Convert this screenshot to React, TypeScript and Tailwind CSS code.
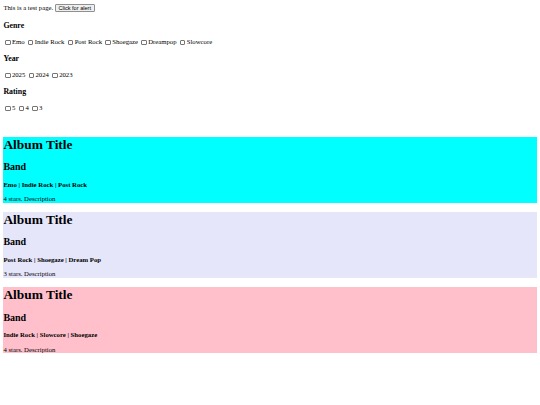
const GENRES = ["Emo", "Indie Rock", "Post Rock", "Shoegaze", "Dreampop", "Slowcore"];
const YEARS = ["2025", "2024", "2023"];
const RATINGS = ["5", "4", "3"];

const ALBUMS = [
  { bg: "bg-[#00ffff]", tags: "Emo | Indie Rock | Post Rock", stars: 4 },
  { bg: "bg-[#e6e6fa]", tags: "Post Rock | Shoegaze | Dream Pop", stars: 3 },
  { bg: "bg-[#ffc0cb]", tags: "Indie Rock | Slowcore | Shoegaze", stars: 4 },
];

function CheckRow({ items }: { items: string[] }) {
  return (
    <div className="flex h-[8.3px] items-center whitespace-pre">
      {items.map((item, i) => (
        <label key={item} className="flex items-center">
          <input
            type="checkbox"
            className={`m-0 ml-[1.7px] mr-[1.3px] h-[5.5px] w-[5.5px] appearance-none rounded-[1px] border-[0.6px] border-[#767676] bg-white ${i > 0 ? "ml-[3.4px]" : ""}`}
          />
          <span>{item}</span>
        </label>
      ))}
    </div>
  );
}

function Heading({ children }: { children: string }) {
  return <h3 className="mt-[7.86px] mb-[7.86px] text-[7.86px] leading-[9px] font-bold">{children}</h3>;
}

export default function App() {
  return (
    <div className="min-h-[405px] bg-white p-[3.4px] font-['Liberation_Serif',serif] text-[6.72px] leading-[7.8px] text-black">
      <div className="flex h-[10px] items-center">
        <span>This is a test page.&nbsp;</span>
        <button className="h-[8px] rounded-[1px] border-[0.6px] border-[#8f8f8f] bg-[#efefef] px-[2.5px] font-['Liberation_Sans',sans-serif] text-[5.6px] leading-[6.4px] text-black">
          Click for alert
        </button>
      </div>

      <Heading>Genre</Heading>
      <CheckRow items={GENRES} />
      <Heading>Year</Heading>
      <CheckRow items={YEARS} />
      <Heading>Rating</Heading>
      <CheckRow items={RATINGS} />

      <div className="mt-[24.4px] flex flex-col gap-[9.4px]">
        {ALBUMS.map((a, i) => (
          <div key={i} className={`flex flex-col ${a.bg}`}>
            <h1 className="text-[13.4px] leading-[15.4px] font-bold">Album Title</h1>
            <h2 className="mt-[8.8px] text-[10px] leading-[11.5px] font-bold">Band</h2>
            <h4 className="mt-[8.2px] text-[6.72px] leading-[7.7px] font-bold">{a.tags}</h4>
            <p className="mt-[6.6px] leading-[7.7px]">{a.stars} stars. Description</p>
          </div>
        ))}
      </div>
    </div>
  );
}
